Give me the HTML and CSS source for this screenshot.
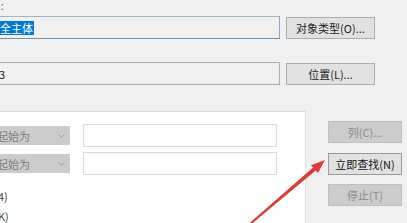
FILE: index.html
```html
<!DOCTYPE html>
<html lang="zh-CN">
<head>
<meta charset="utf-8">
<title>选择用户</title>
<link rel="stylesheet" href="styles.css">
</head>
<body>
<div class="dialog">
  <div class="lbl-top"><span class="cut">):</span></div>
  <div class="row">
    <div class="field focus"><span class="sel">全主体</span></div>
    <button class="btn">对象类型(O)...</button>
  </div>
  <div class="row r2">
    <div class="field"><span class="val">3</span></div>
    <button class="btn">位置(L)...</button>
  </div>
  <div class="lower">
    <div class="panel">
      <div class="qrow">
        <div class="combo"><span class="ctext">起始为</span><svg class="chev" width="7" height="4" viewBox="0 0 7 4"><polyline points="0.5,0.5 3.5,3.5 6.5,0.5" fill="none" stroke="#9a9a9a" stroke-width="1"/></svg></div>
        <div class="tbox"></div>
      </div>
      <div class="qrow">
        <div class="combo"><span class="ctext">起始为</span><svg class="chev" width="7" height="4" viewBox="0 0 7 4"><polyline points="0.5,0.5 3.5,3.5 6.5,0.5" fill="none" stroke="#9a9a9a" stroke-width="1"/></svg></div>
        <div class="tbox"></div>
      </div>
      <div class="chk first">4)</div>
      <div class="chk">K)</div>
    </div>
    <div class="side">
      <button class="sbtn dis">列(C)...</button>
      <button class="sbtn def">立即查找(N)</button>
      <button class="sbtn dis stop">停止(T)</button>
    </div>
  </div>
</div>
<svg class="arrow" width="407" height="223" viewBox="0 0 407 223">
  <polygon points="249.3,223.2 313.1,167.6 310.9,165.2 325,160 318,173.1 315.7,170.6 250.8,224.6" fill="#dc3c37"/>
</svg>
</body>
</html>
```

FILE: styles.css
```css
html, body {
  margin: 0;
  padding: 0;
}
body {
  width: 407px;
  height: 223px;
  overflow: hidden;
  position: relative;
  background: #f0f0f0;
  font-family: "Noto Sans CJK SC", "Noto Sans", sans-serif;
  font-size: 11px;
  line-height: 14px;
  color: #1e1e1e;
}
.dialog {
  width: 407px;
  height: 223px;
  overflow: hidden;
}
.lbl-top {
  height: 16px;
  line-height: 10px;
  color: #666;
}
.cut {
  display: inline-block;
  margin-left: -3px;
}
.row {
  display: flex;
  align-items: flex-start;
  gap: 6px;
}
.r2 {
  margin-top: 23px;
}
.field {
  margin-left: -10px;
  width: 290px;
  height: 23px;
  box-sizing: border-box;
  border: 1px solid #adadad;
  background: #f0f0f0;
  display: flex;
  align-items: center;
  padding-left: 9px;
}
.field.focus {
  border-color: #9cb5ca;
  border-bottom-color: #6f95b5;
  border-right-color: #86a8c4;
}
.sel {
  background: #0078d7;
  color: #fff;
  line-height: 14px;
  padding-right: 1px;
}
.val {
  margin-left: -1px;
  color: #222;
}
.btn {
  width: 89px;
  height: 22px;
  margin-top: 1px;
  box-sizing: border-box;
  border: 1px solid #adadad;
  background: #e1e1e1;
  font: inherit;
  color: #222;
  padding: 0;
}
.lower {
  display: flex;
  margin-top: 26px;
}
.panel {
  margin-left: -10px;
  width: 316px;
  height: 140px;
  box-sizing: border-box;
  background: #fff;
  border-top: 1px solid #dadada;
  border-right: 1px solid #e2e2e2;
  padding-top: 12px;
}
.qrow {
  display: flex;
  align-items: center;
  gap: 13px;
  height: 23px;
}
.qrow + .qrow {
  margin-top: 5px;
}
.combo {
  width: 80px;
  height: 19px;
  box-sizing: border-box;
  background: #cccccc;
  color: #7c7c7c;
  display: flex;
  align-items: center;
  justify-content: space-between;
  padding: 0 5px 0 7px;
}
.chev {
  display: block;
}
.tbox {
  width: 194px;
  height: 23px;
  box-sizing: border-box;
  border: 1px solid #d9d9d9;
  background: #fff;
}
.chk {
  margin-left: 8px;
  color: #444;
}
.chk.first {
  margin-top: 14px;
}
.chk + .chk {
  margin-top: 6px;
}
.side {
  padding-left: 22px;
  padding-top: 10px;
  display: flex;
  flex-direction: column;
}
.sbtn {
  width: 74px;
  height: 22px;
  box-sizing: border-box;
  border: 1px solid #adadad;
  background: #e1e1e1;
  font: inherit;
  color: #111;
  padding: 0;
  margin-bottom: 10px;
}
.sbtn.dis {
  background: #cccccc;
  border-color: #bfbfbf;
  color: #8a8a8a;
}
.sbtn.def {
  border-color: #9a9a9a;
  margin-bottom: 9px;
}
.arrow {
  position: absolute;
  left: 0;
  top: 0;
  pointer-events: none;
}
```
